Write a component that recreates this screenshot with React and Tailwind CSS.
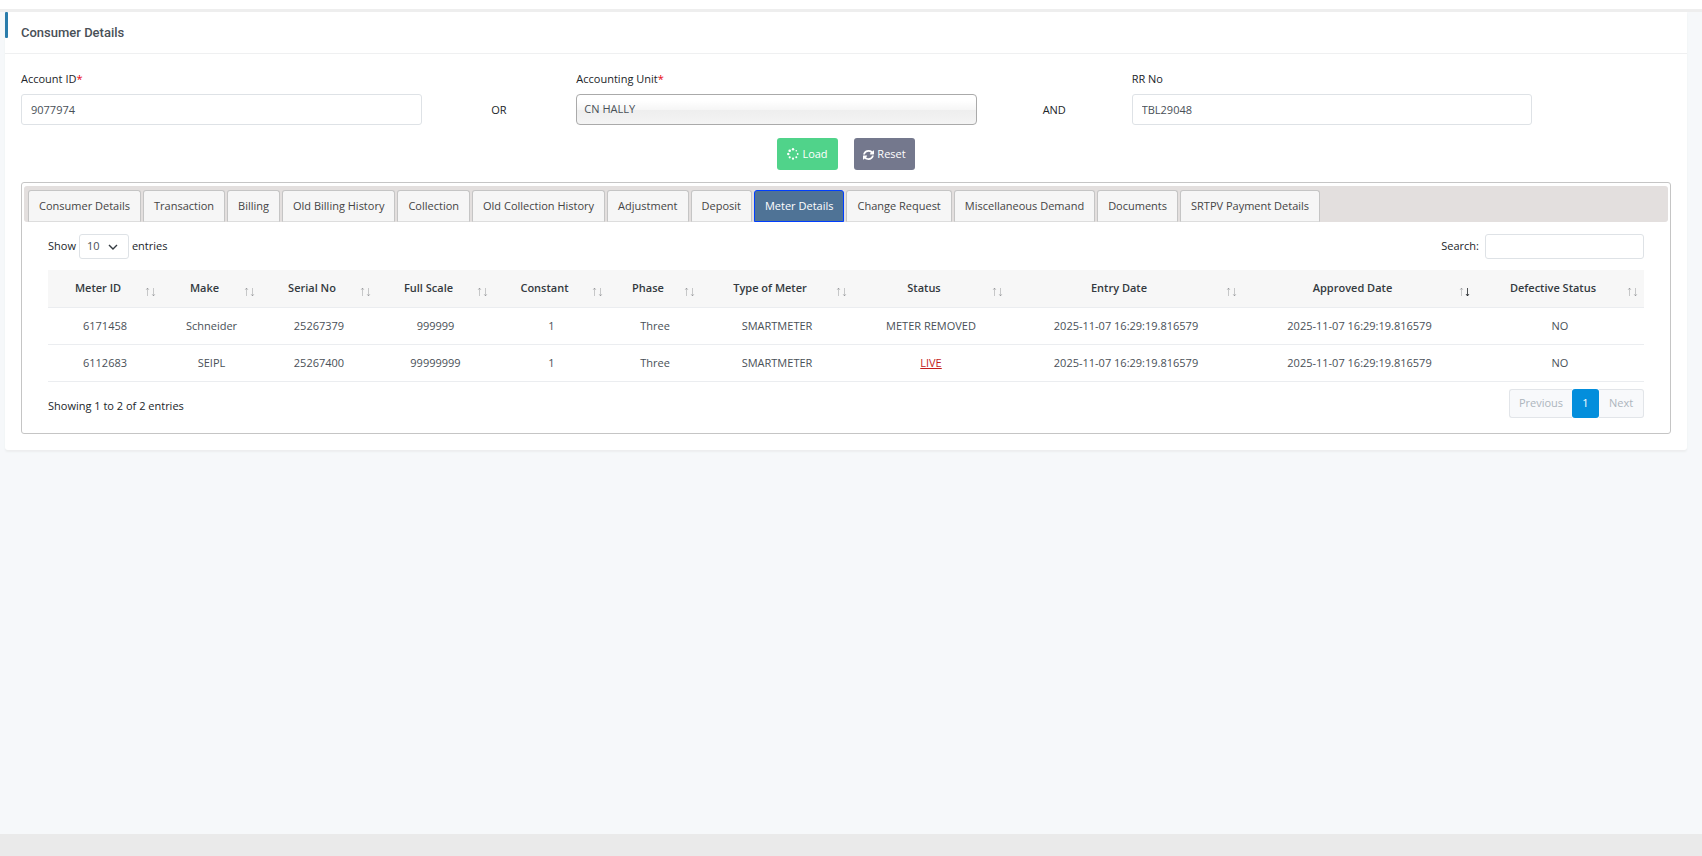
import React, { useState } from "react";

const TABS = [
  "Consumer Details",
  "Transaction",
  "Billing",
  "Old Billing History",
  "Collection",
  "Old Collection History",
  "Adjustment",
  "Deposit",
  "Meter Details",
  "Change Request",
  "Miscellaneous Demand",
  "Documents",
  "SRTPV Payment Details",
];

const COLUMNS = [
  { title: "Meter ID", width: "w-[114px]" },
  { title: "Make", width: "w-[99px]" },
  { title: "Serial No", width: "w-[116px]" },
  { title: "Full Scale", width: "w-[117px]" },
  { title: "Constant", width: "w-[115px]" },
  { title: "Phase", width: "w-[92px]" },
  { title: "Type of Meter", width: "w-[152px]" },
  { title: "Status", width: "w-[156px]" },
  { title: "Entry Date", width: "w-[234px]" },
  { title: "Approved Date", width: "w-[233px]", sorted: true },
  { title: "Defective Status", width: "w-[168px]" },
];

const METERS = [
  {
    id: "6171458",
    make: "Schneider",
    serial: "25267379",
    scale: "999999",
    constant: "1",
    phase: "Three",
    type: "SMARTMETER",
    status: "METER REMOVED",
    entry: "2025-11-07 16:29:19.816579",
    approved: "2025-11-07 16:29:19.816579",
    defective: "NO",
  },
  {
    id: "6112683",
    make: "SEIPL",
    serial: "25267400",
    scale: "99999999",
    constant: "1",
    phase: "Three",
    type: "SMARTMETER",
    status: "LIVE",
    entry: "2025-11-07 16:29:19.816579",
    approved: "2025-11-07 16:29:19.816579",
    defective: "NO",
  },
];

const SpinnerIcon = () => (
  <svg viewBox="0 0 12 12" className="h-3 w-3" fill="currentColor" aria-hidden="true">
    <circle cx="6" cy="1.300" r="1.200" />
    <circle cx="9.300" cy="2.700" r="0.800" />
    <circle cx="10.700" cy="6" r="0.900" />
    <circle cx="9.300" cy="9.300" r="1" />
    <circle cx="6" cy="10.700" r="1.100" />
    <circle cx="2.700" cy="9.300" r="1.100" />
    <circle cx="1.300" cy="6" r="1.200" />
    <circle cx="2.700" cy="2.700" r="1.300" />
  </svg>
);

const RefreshIcon = () => (
  <svg viewBox="0 0 1536 1536" className="h-[11px] w-[11px]" fill="currentColor" aria-hidden="true">
    <path d="M1511 928q0 5-1 7-64 268-268 434.500t-478 166.500q-146 0-282.500-55t-243.500-157l-129 129q-19 19-45 19t-45-19-19-45v-448q0-26 19-45t45-19h448q26 0 45 19t19 45-19 45l-137 137q71 66 161 102t187 36q134 0 250-65t186-179q11-17 53-117 8-23 30-23h192q13 0 22.500 9.500t9.500 22.500zM1536 256v448q0 26-19 45t-45 19h-448q-26 0-45-19t-19-45 19-45l138-138q-148-137-349-137-134 0-250 65t-186 179q-11 17-53 117-8 23-30 23h-199q-13 0-22.500-9.500t-9.500-22.500v-7q65-268 270-434.500t480-166.500q146 0 284 55.500t245 156.500l130-129q19-19 45-19t45 19 19 45z" />
  </svg>
);

const SortIcon = ({ sorted }) => (
  <svg
    viewBox="0 0 11 10"
    className="absolute right-[6px] bottom-[10px] h-[10px] w-[11px]"
    fill="none"
    stroke="#212529"
    aria-hidden="true"
  >
    <path d="M2.500 9V1M1 3L2.500 1L4 3" strokeOpacity="0.22" />
    <path d="M8.500 1V9M7 7L8.500 9L10 7" strokeOpacity={sorted ? 0.8 : 0.22} />
  </svg>
);

const TextField = ({ id, label, required, value, onChange }) => (
  <div className="col-span-3 px-2">
    <label htmlFor={id} className="block text-[11px] leading-4">
      {label}
      {required && <span className="text-red-600">*</span>}
    </label>
    <input
      id={id}
      type="text"
      value={value}
      onChange={(e) => onChange(e.target.value)}
      className="mt-[7px] h-[31px] w-full rounded-[3px] border border-[#dee2e6] bg-white px-[9px] text-[11px] text-[#495057]"
    />
  </div>
);

const MeterTable = () => (
  <table className="mt-[11px] w-full border-collapse text-center text-[11px]">
    <thead>
      <tr className="h-[37px] border-b border-[#ebedf0] bg-[#f7f7f7]">
        {COLUMNS.map((col) => (
          <th key={col.title} className={`relative pr-[14px] font-semibold whitespace-nowrap text-[#343a40] ${col.width}`}>
            {col.title}
            <SortIcon sorted={col.sorted} />
          </th>
        ))}
      </tr>
    </thead>
    <tbody>
      {METERS.map((meter) => (
        <tr key={meter.id} className="h-[37px] border-b border-[#ebedf0] text-[#495057] *:pt-0.5">
          <td>{meter.id}</td>
          <td>{meter.make}</td>
          <td>{meter.serial}</td>
          <td>{meter.scale}</td>
          <td>{meter.constant}</td>
          <td>{meter.phase}</td>
          <td>{meter.type}</td>
          <td>
            {meter.status === "LIVE" ? (
              <a href="#live" className="text-[#c41c1c] underline">
                {meter.status}
              </a>
            ) : (
              meter.status
            )}
          </td>
          <td>{meter.entry}</td>
          <td>{meter.approved}</td>
          <td>{meter.defective}</td>
        </tr>
      ))}
    </tbody>
  </table>
);

const App = () => {
  const [accountId, setAccountId] = useState("9077974");
  const [unit, setUnit] = useState("CN HALLY");
  const [rrNo, setRrNo] = useState("TBL29048");
  const [activeTab, setActiveTab] = useState("Meter Details");
  const [search, setSearch] = useState("");

  const handleReset = () => {
    setAccountId("");
    setRrNo("");
  };

  return (
    <div className="flex min-h-screen flex-col bg-[#f6f8fa] font-['Open_Sans','Noto_Sans',sans-serif] text-[11px] text-[#212529]">
      <header className="h-3 border-b-[3px] border-[#eeeeee] bg-white" />

      <main className="mr-[15px] ml-[5px] rounded-b-[3px] bg-white shadow-[0_2px_2px_#eceeef]">
        <div className="flex h-[42px] border-b border-[#eff0f1]">
          <div className="h-[26px] w-[3px] rounded-[1px] bg-[#2a7cab]" />
          <h1 className="ml-[13px] self-center font-['Roboto',sans-serif] text-[13px] font-medium text-[#495057]">
            Consumer Details
          </h1>
        </div>

        <div className="px-4 pt-[17px] pb-4">
          {/* Search form */}
          <div className="-mx-2 grid grid-cols-12">
            <TextField id="account-id" label="Account ID" required value={accountId} onChange={setAccountId} />
            <div className="pt-[31px] text-center leading-4">OR</div>
            <div className="col-span-3 px-2">
              <label htmlFor="accounting-unit" className="block leading-4">
                Accounting Unit<span className="text-red-600">*</span>
              </label>
              <select
                id="accounting-unit"
                value={unit}
                onChange={(e) => setUnit(e.target.value)}
                className="mt-[7px] h-[31px] w-full appearance-none rounded-[4px] border border-[#aaaaaa] bg-[linear-gradient(#ffffff_20%,#f6f6f6_50%,#eeeeee_52%,#f4f4f4_100%)] px-[7px] text-[#495057]"
              >
                <option>CN HALLY</option>
              </select>
            </div>
            <div className="pt-[31px] text-center leading-4">AND</div>
            <TextField id="rr-no" label="RR No" value={rrNo} onChange={setRrNo} />
          </div>

          <div className="mt-[13px] flex justify-center gap-4 text-white">
            <button type="button" className="flex h-8 w-[61px] items-center justify-center gap-[3px] rounded-[3px] bg-[#50d38a]">
              <SpinnerIcon />
              Load
            </button>
            <button
              type="button"
              onClick={handleReset}
              className="flex h-8 w-[61px] items-center justify-center gap-[3px] rounded-[3px] bg-[#74788d]"
            >
              <RefreshIcon />
              Reset
            </button>
          </div>

          {/* Tabs */}
          <section className="mt-3 rounded-[3px] border border-[#c5c5c5] px-[2px] pt-[3px] pb-[15px]">
            <div role="tablist" className="flex h-9 items-end gap-[2px] rounded-[3px] bg-[#e3dfde] pl-1">
              {TABS.map((tab) => (
                <button
                  key={tab}
                  type="button"
                  role="tab"
                  aria-selected={tab === activeTab}
                  onClick={() => setActiveTab(tab)}
                  className={
                    tab === activeTab
                      ? "h-8 rounded-t-[3px] border border-[#003eff] bg-[#4f7396] px-[10px] whitespace-nowrap text-white"
                      : "h-8 rounded-t-[3px] border border-[#c5c5c5] border-b-[#dddddd] bg-[#f6f6f6] px-[10px] whitespace-nowrap text-[#454545]"
                  }
                >
                  {tab}
                </button>
              ))}
            </div>

            <div className="px-6 pt-3">
              <div className="flex items-center justify-between">
                <div className="flex items-center gap-[3px]">
                  <label htmlFor="page-size">Show</label>
                  <div className="relative">
                    <select
                      id="page-size"
                      className="block h-[25px] w-[50px] appearance-none rounded-[3px] border border-[#dee2e6] bg-white px-[7px] text-[#495057]"
                    >
                      <option>10</option>
                      <option>25</option>
                      <option>50</option>
                    </select>
                    <svg
                      viewBox="0 0 10 6"
                      className="pointer-events-none absolute top-[10px] right-[11px] h-[6px] w-[10px]"
                      fill="none"
                      stroke="#343a40"
                      strokeWidth="1.400"
                      aria-hidden="true"
                    >
                      <path d="M1 1L5 5L9 1" />
                    </svg>
                  </div>
                  <span>entries</span>
                </div>
                <label className="flex items-center gap-[6px]">
                  Search:
                  <input
                    type="search"
                    value={search}
                    onChange={(e) => setSearch(e.target.value)}
                    className="h-[25px] w-[159px] rounded-[3px] border border-[#dee2e6] bg-white px-2"
                  />
                </label>
              </div>

              <MeterTable />

              <div className="mt-[7px] flex justify-between">
                <p className="mt-[9px] leading-4">Showing 1 to 2 of 2 entries</p>
                <nav className="flex h-[29px] text-[#adb5bd]">
                  <button type="button" disabled className="w-[63px] rounded-l-[3px] border border-r-0 border-[#e2e5e9] bg-[#f8f9fb]">
                    Previous
                  </button>
                  <button type="button" className="w-[27px] rounded-[3px] bg-[#038edc] text-white">
                    1
                  </button>
                  <button type="button" disabled className="w-[45px] rounded-r-[3px] border border-l-0 border-[#e2e5e9] bg-[#f8f9fb]">
                    Next
                  </button>
                </nav>
              </div>
            </div>
          </section>
        </div>
      </main>

      <footer className="mt-auto h-[22px] bg-[#eaeaea]" />
    </div>
  );
};

export default App;
